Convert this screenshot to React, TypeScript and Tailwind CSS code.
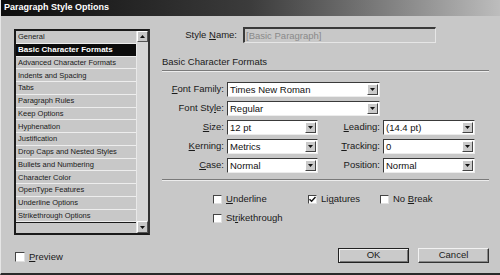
import React from "react";

const font = { fontFamily: '"Liberation Sans", Arial, sans-serif' };

const sections = [
  "General",
  "Basic Character Formats",
  "Advanced Character Formats",
  "Indents and Spacing",
  "Tabs",
  "Paragraph Rules",
  "Keep Options",
  "Hyphenation",
  "Justification",
  "Drop Caps and Nested Styles",
  "Bullets and Numbering",
  "Character Color",
  "OpenType Features",
  "Underline Options",
  "Strikethrough Options",
];

// label with one mnemonic letter underlined
function Mn({ text, at }: { text: string; at: number }) {
  if (at < 0) return <>{text}</>;
  return (
    <>
      {text.slice(0, at)}
      <span className="underline underline-offset-1">{text[at]}</span>
      {text.slice(at + 1)}
    </>
  );
}

function Arrow({ up }: { up?: boolean }) {
  return (
    <svg width="5" height="3" viewBox="0 0 5 3">
      <path d={up ? "M2.5 0L5 3H0z" : "M0 0h5L2.5 3z"} fill="#111" />
    </svg>
  );
}

function Field({
  value,
  width,
  dropdown,
}: {
  value: string;
  width: string;
  dropdown?: boolean;
}) {
  return (
    <div
      className={`${width} h-[15px] flex items-stretch bg-white border-t border-l border-[#3a3a3a] border-b border-r border-b-[#ececec] border-r-[#ececec]`}
    >
      <div className="flex-1 pl-[2px] text-[9.5px] leading-[13px] text-[#111] truncate">
        {value}
      </div>
      {dropdown && (
        <div className="w-[11px] my-[1px] mr-[1px] bg-[#cacaca] border-t border-l border-white border-b border-r border-b-[#444] border-r-[#444] flex items-center justify-center">
          <Arrow />
        </div>
      )}
    </div>
  );
}

function Row({
  label,
  at,
  children,
  labelW,
}: {
  label: string;
  at: number;
  children: React.ReactNode;
  labelW: string;
}) {
  return (
    <div className="flex items-center">
      <div className={`${labelW} text-right text-[9.5px] text-[#1a1a1a] pr-[3px]`}>
        <Mn text={label} at={at} />
      </div>
      {children}
    </div>
  );
}

function Check({
  label,
  at,
  checked,
}: {
  label: string;
  at: number;
  checked?: boolean;
}) {
  return (
    <div className="flex items-center gap-[4px]">
      <div className="w-[9px] h-[9px] bg-white border-t border-l border-[#444] border-b border-r border-b-[#e0e0e0] border-r-[#e0e0e0] flex items-center justify-center">
        {checked && (
          <svg width="7" height="7" viewBox="0 0 7 7">
            <path d="M0.5 3.2L2.6 5.3L6.5 1" stroke="#111" strokeWidth="1.4" fill="none" />
          </svg>
        )}
      </div>
      <span className="text-[9.5px] text-[#1a1a1a]">
        <Mn text={label} at={at} />
      </span>
    </div>
  );
}

function Button({ label, primary }: { label: string; primary?: boolean }) {
  return (
    <div
      className={`w-[71px] h-[15px] bg-[#cacaca] flex items-center justify-center text-[9.5px] text-[#1a1a1a] ${
        primary
          ? "border border-[#222] shadow-[inset_1px_1px_0_#f2f2f2,inset_-1px_-1px_0_#777]"
          : "border-t border-l border-[#f2f2f2] border-b border-r border-b-[#333] border-r-[#333] shadow-[inset_-1px_-1px_0_#888]"
      }`}
    >
      {label}
    </div>
  );
}

export default function App() {
  return (
    <div
      className="w-[500px] h-[275px] bg-[#c8c8c8] flex flex-col overflow-hidden border-l border-l-[#e6e6e6] border-b-2 border-b-[#2a2a2a]"
      style={font}
    >
      {/* title bar */}
      <div className="h-[16px] shrink-0 bg-gradient-to-r from-[#0e0e0e] via-[#3c3c3c] to-[#bdbdbd] flex items-center pl-[3px]">
        <span className="text-white font-bold text-[9px]">
          Paragraph Style Options
        </span>
      </div>

      <div className="flex flex-1">
        {/* left column */}
        <div className="w-[148px] pl-[13px] pt-[13px] flex flex-col">
          <div className="w-[136px] h-[206px] border-2 border-[#1a1a1a] border-r-[#333] flex bg-[#c8c8c8]">
            <div className="flex-1 flex flex-col">
              {sections.map((s, i) => (
                <div
                  key={s}
                  className={`h-[12.75px] shrink-0 pl-[2px] flex items-center border-b border-[#ededed] ${
                    i === 1
                      ? "bg-[#0c0c0c] text-white font-bold text-[8px]"
                      : "text-[#1a1a1a] text-[7.5px]"
                  }`}
                >
                  {s}
                </div>
              ))}
              <div className="flex-1 border-t border-[#1a1a1a]" />
            </div>
            <div className="w-[12px] bg-[#d6d6d6] border-l border-[#e8e8e8] flex flex-col justify-between">
              <div className="h-[11px] bg-[#c8c8c8] border-t border-l border-white border-b border-r border-b-[#555] border-r-[#555] flex items-center justify-center">
                <Arrow up />
              </div>
              <div className="h-[12px] bg-[#c8c8c8] border-t border-l border-white border-b border-r border-b-[#555] border-r-[#555] flex items-center justify-center">
                <Arrow />
              </div>
            </div>
          </div>
          <div className="mt-[15px] flex items-center gap-[4px] pl-[1px]">
            <div className="w-[10px] h-[10px] bg-white border-t border-l border-[#444] border-b border-r border-b-[#e0e0e0] border-r-[#e0e0e0]" />
            <span className="text-[9.5px] text-[#1a1a1a]">
              <Mn text="Preview" at={0} />
            </span>
          </div>
        </div>

        {/* right column */}
        <div className="ml-[13px] w-[327px] pt-[11px] flex flex-col">
          <div className="flex items-center">
            <div className="w-[81px] text-right pr-[6px] text-[9.5px] text-[#1a1a1a]">
              Style <Mn text="Name:" at={0} />
            </div>
            <div className="w-[193px] h-[16px] border-t-2 border-l-2 border-[#3a3a3a] border-b border-r border-b-[#e6e6e6] border-r-[#e6e6e6] pl-[1px] text-[9.5px] leading-[13px] text-[#8a8a8a]">
              [Basic Paragraph]
            </div>
          </div>

          <div className="mt-[13px] text-[9.5px] text-[#1a1a1a] leading-[12px]">
            Basic Character Formats
          </div>
          <div className="mt-[2px] h-[2px] border-t border-[#7a7a7a] border-b border-b-[#ececec]" />

          <div className="mt-[10px] flex flex-col gap-[4px]">
            <Row label="Font Family:" at={0} labelW="w-[65px]">
              <Field value="Times New Roman" width="w-[153px]" dropdown />
            </Row>
            <Row label="Font Style:" at={8} labelW="w-[65px]">
              <Field value="Regular" width="w-[153px]" dropdown />
            </Row>
            {[
              ["Size:", 0, "12 pt", "Leading:", 0, "(14.4 pt)"],
              ["Kerning:", 0, "Metrics", "Tracking:", 0, "0"],
              ["Case:", 0, "Normal", "Position:", -1, "Normal"],
            ].map((r) => (
              <div key={r[0] as string} className="flex items-center">
                <Row label={r[0] as string} at={r[1] as number} labelW="w-[65px]">
                  <Field value={r[2] as string} width="w-[91px]" dropdown />
                </Row>
                <Row label={r[3] as string} at={r[4] as number} labelW="w-[65px]">
                  <Field value={r[5] as string} width="w-[92px]" dropdown />
                </Row>
              </div>
            ))}
          </div>

          <div className="mt-[6px] h-[2px] border-t border-[#7a7a7a] border-b border-b-[#ececec]" />

          <div className="mt-[11px] pl-[51px] grid grid-cols-[95px_72px_auto] gap-y-[5px]">
            <Check label="Underline" at={0} />
            <Check label="Ligatures" at={2} checked />
            <Check label="No Break" at={3} />
            <Check label="Strikethrough" at={2} />
          </div>

          <div className="mt-auto mb-[10px] flex justify-end gap-[9px]">
            <Button label="OK" primary />
            <Button label="Cancel" />
          </div>
        </div>
      </div>
    </div>
  );
}
